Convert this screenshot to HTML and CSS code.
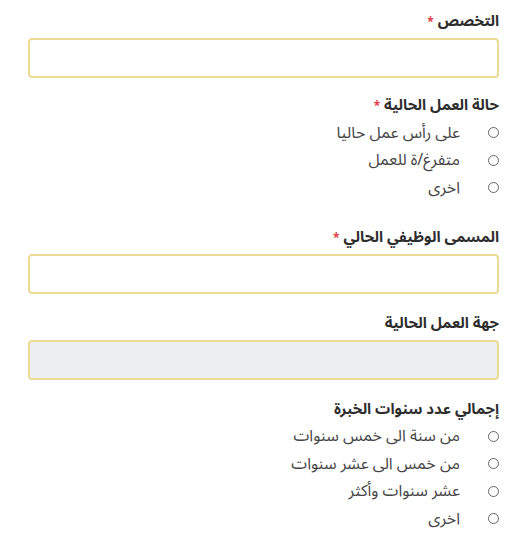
FILE: index.html
```html
<!DOCTYPE html>
<html lang="ar" dir="rtl">
<head>
<meta charset="utf-8">
<link rel="stylesheet" href="styles.css">
</head>
<body>
<form class="form">
  <div class="field first">
    <label class="label">التخصص <span class="req">*</span></label>
    <input class="input" type="text">
  </div>
  <div class="field">
    <div class="label">حالة العمل الحالية <span class="req">*</span></div>
    <div class="options">
      <label class="option"><span class="radio"></span><span>على رأس عمل حاليا</span></label>
      <label class="option"><span class="radio"></span><span>متفرغ/ة للعمل</span></label>
      <label class="option"><span class="radio"></span><span>اخرى</span></label>
    </div>
  </div>
  <div class="field gap-lg">
    <label class="label">المسمى الوظيفي الحالي <span class="req">*</span></label>
    <input class="input" type="text">
  </div>
  <div class="field">
    <label class="label">جهة العمل الحالية</label>
    <input class="input disabled" type="text" disabled>
  </div>
  <div class="field">
    <div class="label">إجمالي عدد سنوات الخبرة</div>
    <div class="options">
      <label class="option"><span class="radio"></span><span>من سنة الى خمس سنوات</span></label>
      <label class="option"><span class="radio"></span><span>من خمس الى عشر سنوات</span></label>
      <label class="option"><span class="radio"></span><span>عشر سنوات وأكثر</span></label>
      <label class="option"><span class="radio"></span><span>اخرى</span></label>
    </div>
  </div>
</form>
</body>
</html>
```
FILE: styles.css
```css
html, body {
  margin: 0;
  padding: 0;
  background: #ffffff;
}
body {
  font-family: "Noto Sans Arabic", "DejaVu Sans", sans-serif;
  color: #333333;
  direction: rtl;
}
.form {
  display: flex;
  flex-direction: column;
  padding: 10px 27px 0 28px;
}
.field {
  display: flex;
  flex-direction: column;
  margin-bottom: 18px;
}
.field.first {
  margin-bottom: 16px;
}
.field.gap-lg {
  margin-top: 6px;
}
.label {
  display: block;
  height: 22px;
  font-size: 15px;
  font-weight: bold;
  line-height: 22px;
  color: #2d2d2d;
  margin-bottom: 6px;
}
.req {
  color: #e0404a;
  font-size: 12px;
  line-height: 1;
}
.input {
  box-sizing: border-box;
  height: 40px;
  width: 100%;
  border: 2px solid #ecdb95;
  border-radius: 4px;
  background: #ffffff;
  outline: none;
  margin: 0;
}
.input.disabled {
  background: #eceeef;
}
.options {
  display: flex;
  flex-direction: column;
  margin-top: -3px;
}
.option {
  display: flex;
  align-items: center;
  gap: 28px;
  height: 27.5px;
  line-height: 20px;
  font-size: 16px;
  color: #444444;
}
.radio {
  box-sizing: border-box;
  flex: none;
  width: 11px;
  height: 11px;
  border: 1px solid #666666;
  border-radius: 50%;
}
```
